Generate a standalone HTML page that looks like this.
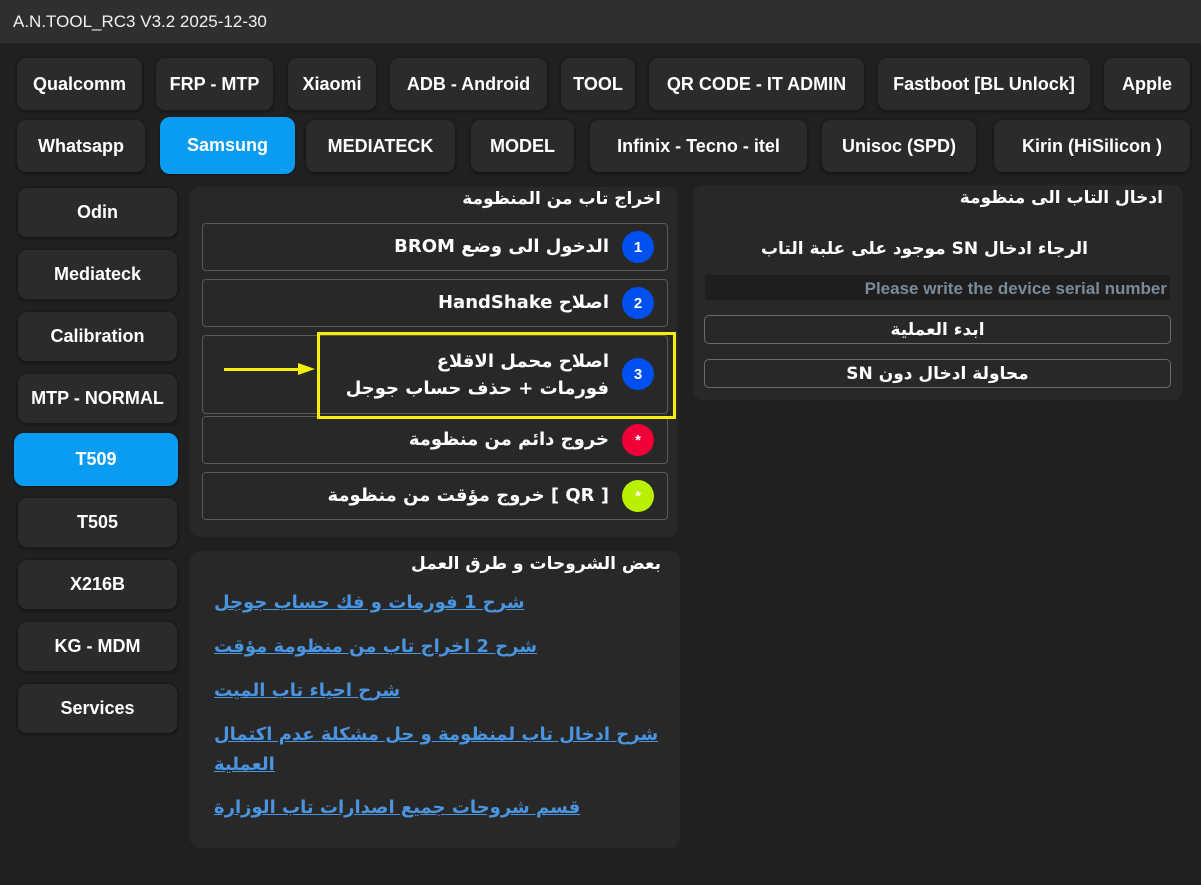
<!DOCTYPE html>
<html><head><meta charset="utf-8"><style>
*{box-sizing:border-box;margin:0;padding:0}
body{width:1201px;height:885px;background:#202020;font-family:"Liberation Sans","DejaVu Sans",sans-serif;color:#fff;position:relative;overflow:hidden}
.tb{position:absolute;left:0;top:0;width:1201px;height:43px;background:#2f2f2f;font-size:17px;line-height:43px;padding-left:13px;color:#f0f0f0}
.b{position:absolute;background:#2b2b2b;border:1px solid #1a1a1a;border-radius:10px;font-weight:bold;font-size:18px;display:flex;align-items:center;justify-content:center;white-space:nowrap;box-shadow:0 1px 2px #151515}
.blue{background:#0a9cf0}
.p{position:absolute;background:#282828;border-radius:10px}
.t{position:absolute;font-weight:bold;font-size:17px;direction:rtl;white-space:nowrap;font-family:"DejaVu Sans",sans-serif}
.it{position:absolute;left:202px;width:466px;border:1px solid #5a5a5a;border-radius:4px;background:#282828}
.it span{position:absolute;right:58px;font-weight:bold;font-size:18px;direction:rtl;white-space:nowrap;font-family:"DejaVu Sans",sans-serif;line-height:26px}
.c{position:absolute;left:419px;width:32px;height:32px;border-radius:50%;font-size:15px;font-weight:bold;display:flex;align-items:center;justify-content:center}
.ln{position:absolute;left:214px;color:#4a94e0;text-decoration:underline;font-size:18px;font-weight:bold;direction:rtl;font-family:"DejaVu Sans",sans-serif;line-height:30px}
.rb{position:absolute;left:704px;width:467px;height:29px;border:1px solid #6a6a6a;border-radius:5px;font-weight:bold;font-size:17px;display:flex;align-items:center;justify-content:center;font-family:"DejaVu Sans",sans-serif;direction:rtl}
</style></head><body>
<div class="tb">A.N.TOOL_RC3 V3.2 2025-12-30</div>

<div class="b" style="left:16px;top:57px;width:127px;height:54px">Qualcomm</div>
<div class="b" style="left:155px;top:57px;width:119px;height:54px">FRP - MTP</div>
<div class="b" style="left:287px;top:57px;width:90px;height:54px">Xiaomi</div>
<div class="b" style="left:389px;top:57px;width:159px;height:54px">ADB - Android</div>
<div class="b" style="left:560px;top:57px;width:76px;height:54px">TOOL</div>
<div class="b" style="left:648px;top:57px;width:217px;height:54px">QR CODE - IT ADMIN</div>
<div class="b" style="left:877px;top:57px;width:214px;height:54px">Fastboot [BL Unlock]</div>
<div class="b" style="left:1103px;top:57px;width:88px;height:54px">Apple</div>

<div class="b" style="left:16px;top:119px;width:130px;height:54px">Whatsapp</div>
<div class="b blue" style="left:160px;top:117px;width:135px;height:57px;border-color:#0a9cf0">Samsung</div>
<div class="b" style="left:305px;top:119px;width:151px;height:54px">MEDIATECK</div>
<div class="b" style="left:470px;top:119px;width:105px;height:54px">MODEL</div>
<div class="b" style="left:589px;top:119px;width:219px;height:54px">Infinix - Tecno - itel</div>
<div class="b" style="left:821px;top:119px;width:156px;height:54px">Unisoc (SPD)</div>
<div class="b" style="left:993px;top:119px;width:198px;height:54px">Kirin (HiSilicon )</div>

<div class="b" style="left:17px;top:187px;width:161px;height:51px">Odin</div>
<div class="b" style="left:17px;top:249px;width:161px;height:51px">Mediateck</div>
<div class="b" style="left:17px;top:311px;width:161px;height:51px">Calibration</div>
<div class="b" style="left:17px;top:373px;width:161px;height:51px">MTP - NORMAL</div>
<div class="b blue" style="left:14px;top:433px;width:164px;height:53px;border-color:#0a9cf0">T509</div>
<div class="b" style="left:17px;top:497px;width:161px;height:51px">T505</div>
<div class="b" style="left:17px;top:559px;width:161px;height:51px">X216B</div>
<div class="b" style="left:17px;top:621px;width:161px;height:51px">KG - MDM</div>
<div class="b" style="left:17px;top:683px;width:161px;height:51px">Services</div>

<div class="p" style="left:190px;top:187px;width:488px;height:350px"></div>
<div class="t" style="right:540px;top:189px">اخراج تاب من المنظومة</div>
<div class="it" style="top:223px;height:48px"><span style="top:10px">الدخول الى وضع BROM</span><div class="c" style="top:7px;background:#0050f0">1</div></div>
<div class="it" style="top:279px;height:48px"><span style="top:10px">اصلاح HandShake</span><div class="c" style="top:7px;background:#0050f0">2</div></div>
<div class="it" style="top:335px;height:79px"><span style="top:12px;line-height:27px">اصلاح محمل الاقلاع<br>فورمات + حذف حساب جوجل</span><div class="c" style="top:22px;background:#0050f0">3</div></div>
<div class="it" style="top:416px;height:48px"><span style="top:10px">خروج دائم من منظومة</span><div class="c" style="top:7px;background:#f00038">*</div></div>
<div class="it" style="top:472px;height:48px"><span style="top:10px">[ QR ] خروج مؤقت من منظومة</span><div class="c" style="top:7px;background:#b8f000">*</div></div>
<div style="position:absolute;left:317px;top:332px;width:359px;height:87px;border:3px solid #f5f000"></div>
<div style="position:absolute;left:224px;top:368px;width:76px;height:3px;background:#f5f000"></div>
<div style="position:absolute;left:298px;top:363px;width:0;height:0;border-left:17px solid #f5f000;border-top:6px solid transparent;border-bottom:6px solid transparent"></div>

<div class="p" style="left:190px;top:551px;width:490px;height:297px"></div>
<div class="t" style="right:540px;top:554px">بعض الشروحات و طرق العمل</div>
<div class="ln" style="top:588px">شرح 1 فورمات و فك حساب جوجل</div>
<div class="ln" style="top:632px">شرح 2 اخراج تاب من منظومة مؤقت</div>
<div class="ln" style="top:676px">شرح احياء تاب الميت</div>
<div class="ln" style="top:720px;width:460px;text-align:left">شرح ادخال تاب لمنظومة و حل مشكلة عدم اكتمال العملية</div>
<div class="ln" style="top:793px">قسم شروحات جميع اصدارات تاب الوزارة</div>

<div class="p" style="left:693px;top:185px;width:490px;height:215px"></div>
<div class="t" style="right:38px;top:188px">ادخال التاب الى منظومة</div>
<div class="t" style="right:113px;top:239px">الرجاء ادخال SN موجود على علبة التاب</div>
<div style="position:absolute;left:705px;top:275px;width:465px;height:25px;background:#1e1e1e;color:#7b8a99;font-weight:bold;font-size:17px;text-align:right;padding-right:3px;line-height:27px">Please write the device serial number</div>
<div class="rb" style="top:315px">ابدء العملية</div>
<div class="rb" style="top:359px">محاولة ادخال دون SN</div>
</body></html>
